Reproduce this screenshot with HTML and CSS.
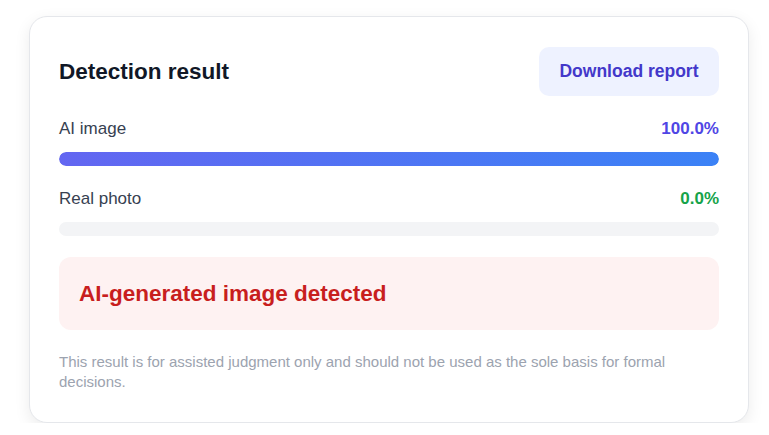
FILE: index.html
```html
<!DOCTYPE html>
<html lang="en">
<head>
<meta charset="utf-8">
<title>Detection result</title>
<link rel="stylesheet" href="styles.css">
</head>
<body>
<div class="card">
  <div class="header">
    <h2 class="title">Detection result</h2>
    <button class="btn">Download report</button>
  </div>
  <div class="metric">
    <div class="metric-row">
      <span class="metric-label">AI image</span>
      <span class="metric-value ai">100.0%</span>
    </div>
    <div class="bar"><div class="bar-fill" style="width:100%"></div></div>
  </div>
  <div class="metric">
    <div class="metric-row">
      <span class="metric-label">Real photo</span>
      <span class="metric-value real">0.0%</span>
    </div>
    <div class="bar"><div class="bar-fill" style="width:0%"></div></div>
  </div>
  <div class="alert">AI-generated image detected</div>
  <p class="note">This result is for assisted judgment only and should not be used as the sole basis for formal decisions.</p>
</div>
</body>
</html>
```
FILE: styles.css
```css
html, body {
  margin: 0;
  padding: 0;
  background: #ffffff;
}
body {
  font-family: "Liberation Sans", Arial, sans-serif;
  padding: 16px 0 0 29px;
}
.card {
  box-sizing: border-box;
  width: 720px;
  background: #ffffff;
  border: 1px solid #e5e7eb;
  border-radius: 18px;
  box-shadow: 0 5px 16px rgba(0, 0, 0, 0.08);
  padding: 30px 29px 30px 29px;
  display: flex;
  flex-direction: column;
}
.header {
  display: flex;
  align-items: center;
  justify-content: space-between;
  margin-bottom: 21px;
}
.title {
  margin: 0;
  font-size: 22.5px;
  line-height: 28px;
  font-weight: 700;
  color: #111827;
}
.btn {
  font-family: inherit;
  border: none;
  background: #eef2ff;
  color: #4338ca;
  font-size: 17.5px;
  font-weight: 700;
  height: 49px;
  width: 180px;
  border-radius: 10px;
  padding: 0;
}
.metric {
  margin-bottom: 21px;
}
.metric-row {
  display: flex;
  justify-content: space-between;
  align-items: center;
  line-height: 24px;
  margin-bottom: 11px;
}
.metric-label {
  font-size: 17px;
  color: #374151;
}
.metric-value {
  font-size: 17px;
  font-weight: 700;
}
.metric-value.ai { color: #4f46e5; }
.metric-value.real { color: #16a34a; }
.bar {
  height: 14px;
  border-radius: 7px;
  background: #f3f4f6;
  overflow: hidden;
}
.bar-fill {
  height: 100%;
  border-radius: 7px;
  background: linear-gradient(90deg, #6366f1, #3b82f6);
}
.alert {
  background: #fef2f2;
  border-radius: 12px;
  height: 73px;
  box-sizing: border-box;
  padding: 0 20px;
  display: flex;
  align-items: center;
  color: #c81e1e;
  font-size: 22.5px;
  font-weight: 700;
}
.note {
  margin: 22px 0 0 0;
  font-size: 15px;
  line-height: 20px;
  color: #9ca3af;
}
```
